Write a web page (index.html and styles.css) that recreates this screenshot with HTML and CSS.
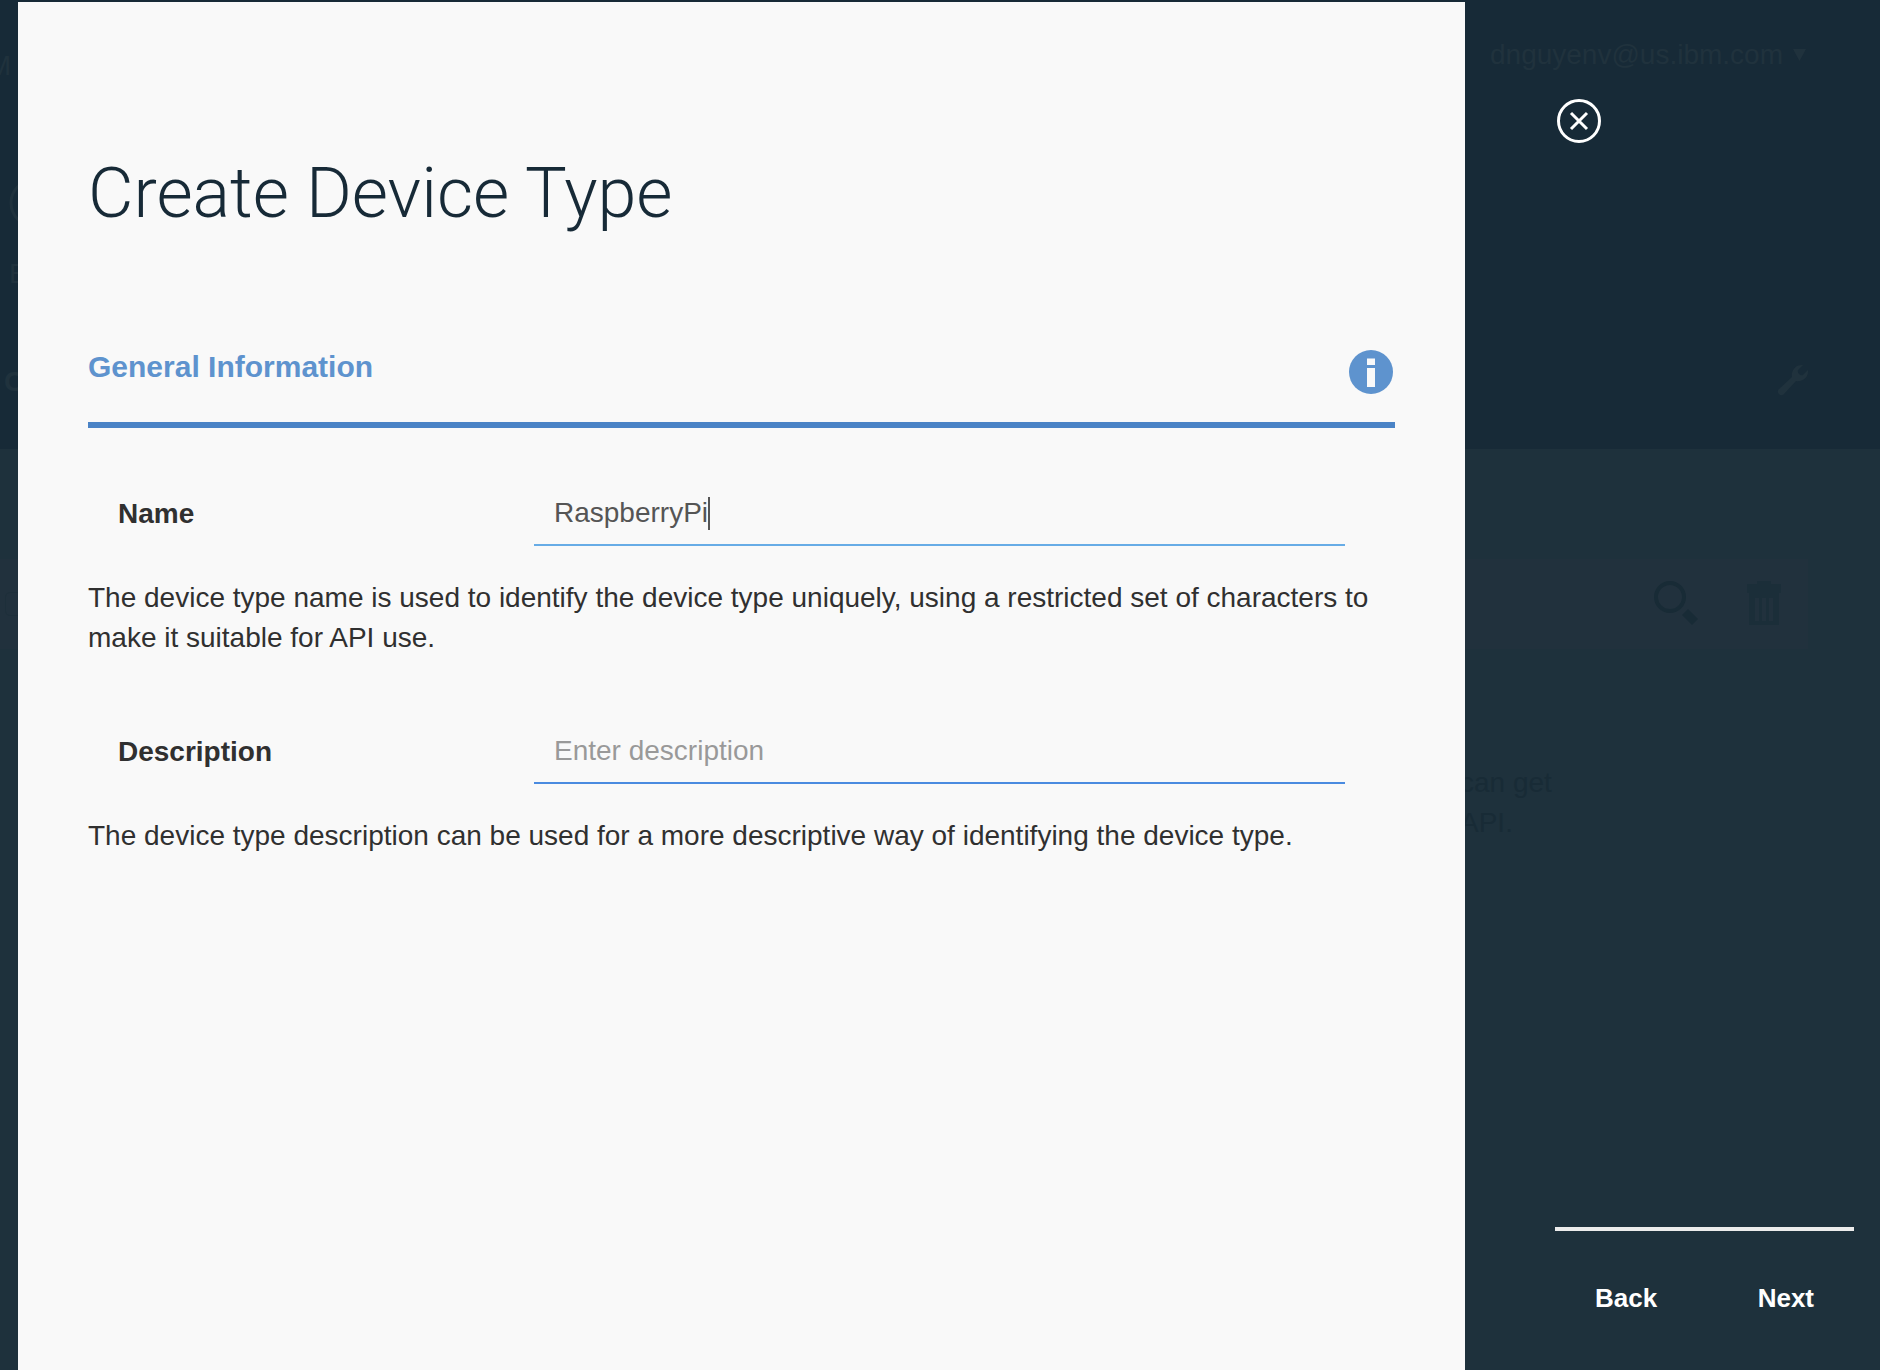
FILE: index.html
```html
<!DOCTYPE html>
<html lang="en">
<head>
<meta charset="utf-8">
<title>Create Device Type</title>
<link rel="stylesheet" href="styles.css">
</head>
<body>
<div class="app">
  <header class="app-header">
    <div class="topbar">
      <span class="brand">M</span>
      <a class="account" href="#">dnguyenv@us.ibm.com <svg width="13" height="12" viewBox="0 0 13 12" aria-hidden="true"><path d="M0 0h13L6.500 12z"/></svg></a>
    </div>
    <div class="org">
      <svg width="50" height="50" viewBox="0 0 50 50" aria-hidden="true"><circle cx="25" cy="25" r="23" fill="none" stroke-width="3"/></svg>
      <span>B</span>
    </div>
    <div class="tabs">
      <span class="tab">C</span>
      <svg class="wrench" width="32" height="32" viewBox="0 0 32 32" aria-hidden="true"><path d="M26 1A10 10 0 0 0 15 13L1.500 25.500a3.600 3.600 0 0 0 5 5L19 17A10 10 0 0 0 31 6L26 11a4 4 0 0 1-5-5z"/></svg>
    </div>
  </header>
  <main class="app-main">
    <div class="toolbar">
      <span class="chip"></span>
      <svg class="search" width="46" height="46" viewBox="0 0 46 46" aria-hidden="true"><circle cx="17" cy="16" r="14" fill="none" stroke-width="4"/><path d="M35 28l10 10-6 6-10-10z"/></svg>
      <svg class="trash" width="34" height="46" viewBox="0 0 34 46" aria-hidden="true"><path fill-rule="evenodd" d="M10 0h14v3h10v9h-2v32H2V12H0V3h10zM8 17v23h4V17zm7 0v23h4V17zm7 0v23h4V17z"/></svg>
    </div>
    <p class="hint">can get<br>API.</p>
  </main>
</div>

<form class="overlay" role="dialog" aria-labelledby="title">
  <section class="panel">
    <h1 class="title" id="title">Create Device Type</h1>
    <div class="section-head">
      <h2 class="section-title">General Information</h2>
      <button class="icon-button" type="button" aria-label="Information">
        <svg width="44" height="44" viewBox="0 0 44 44" aria-hidden="true"><circle cx="22" cy="22" r="22" fill="#5e93ce"/><path fill="#f9f9f9" d="M18 8.500h8V15h-8zM18 18h8v19h-8z"/></svg>
      </button>
    </div>
    <div class="field">
      <label class="label" for="name">Name</label>
      <div class="control control-active">
        <input class="input input-fit" id="name" type="text" value="RaspberryPi"><span class="caret"></span>
      </div>
    </div>
    <p class="help">The device type name is used to identify the device type uniquely, using a restricted set of characters to make it suitable for API use.</p>
    <div class="field">
      <label class="label" for="description">Description</label>
      <div class="control">
        <input class="input" id="description" type="text" placeholder="Enter description">
      </div>
    </div>
    <p class="help">The device type description can be used for a more descriptive way of identifying the device type.</p>
  </section>
  <aside class="side">
    <button class="icon-button" type="button" aria-label="Close">
      <svg width="44" height="44" viewBox="0 0 44 44" fill="none" stroke="#fff" stroke-width="3" aria-hidden="true"><circle cx="22" cy="22" r="20.500"/><path d="M14 14l16 16M30 14L14 30"/></svg>
    </button>
    <div class="actions">
      <button class="action" type="button">Back</button>
      <button class="action" type="submit">Next</button>
    </div>
  </aside>
</form>
</body>
</html>
```
FILE: styles.css
```css
* {
  box-sizing: border-box;
}

body {
  margin: 0;
  overflow: hidden;
  background: #1e313c;
  color: #303030;
  font: 28px/40px "Liberation Sans", Arial, sans-serif;
}

h1, h2, p {
  margin: 0;
}

button, input {
  padding: 0;
  border: 0;
  background: none;
  color: inherit;
  font: inherit;
  outline: 0;
}

svg {
  display: block;
}

/* Dimmed application behind the dialog */
.app {
  min-height: 100vh;
}

.app-header {
  height: 449px;
  padding-top: 31px;
  background: #172a37;
  color: #20323d;
  fill: currentColor;
  stroke: none;
}

.topbar, .tabs {
  display: flex;
  align-items: flex-start;
  justify-content: space-between;
}

.topbar {
  padding-right: 74px;
}

.brand {
  width: 11px;
  padding-top: 15px;
  display: flex;
  justify-content: flex-end;
}

.account {
  display: flex;
  align-items: center;
  gap: 10px;
  padding-top: 4px;
  color: inherit;
  text-decoration: none;
}

.org {
  padding: 92px 0 0 9px;
}

.org svg {
  stroke: currentColor;
}

.org span {
  display: block;
  margin-top: 26px;
}

.tabs {
  padding: 68px 71px 0 4px;
  font-weight: 700;
}

.wrench {
  margin-top: 2px;
}

.app-main {
  padding-top: 110px;
  color: #182b36;
  fill: currentColor;
}

.toolbar {
  display: flex;
  align-items: center;
  height: 90px;
  margin-right: 72px;
  padding: 0 27px 0 5px;
  background: #21313d;
}

.chip {
  width: 24px;
  height: 24px;
  border: 1px solid #1d2f3a;
  border-radius: 5px;
}

.search {
  margin-left: auto;
  stroke: none;
}

.search circle {
  stroke: currentColor;
}

.trash {
  margin-left: 48px;
  color: #1b2e39;
}

.hint {
  width: 420px;
  margin: 114px 0 0 auto;
}

/* Dialog */
.overlay {
  position: absolute;
  inset: 2px 0 0 18px;
  display: flex;
}

.panel {
  flex: 1;
  padding: 147px 70px 0;
  background: #f9f9f9;
}

.title {
  color: #172a37;
  font: 300 70px/88px Roboto, "Liberation Sans", sans-serif;
}

.section-head {
  display: flex;
  justify-content: space-between;
  margin-top: 113px;
  padding-bottom: 28px;
  border-bottom: 6px solid #4a83c6;
}

.section-title {
  color: #5e93ce;
  font-size: 30px;
  line-height: 34px;
}

.icon-button {
  align-self: flex-start;
  width: 44px;
  height: 44px;
}

.section-head .icon-button {
  margin: 0 2px;
}

.field {
  display: flex;
  align-items: center;
  padding: 4px 50px 0 30px;
}

.section-head + .field {
  margin-top: 50px;
}

.help + .field {
  margin-top: 58px;
}

.label {
  flex: 0 0 416px;
  font-weight: 700;
}

.control {
  flex: 1;
  display: flex;
  align-items: center;
  height: 64px;
  padding: 0 20px;
  border-bottom: 2px solid #4a8be0;
}

.control-active {
  border-color: #67ace6;
}

.input {
  width: 100%;
  height: 40px;
  color: #555;
}

.input-fit {
  width: auto;
  field-sizing: content;
}

.input::placeholder {
  color: #999;
}

.caret {
  width: 2px;
  height: 33px;
  background: #555;
}

.help {
  margin-top: 32px;
}

.side {
  flex: 0 0 415px;
  display: flex;
  flex-direction: column;
  justify-content: space-between;
  padding: 97px 26px 50px 90px;
}

.side .icon-button {
  margin-left: 2px;
}

.actions {
  display: flex;
  justify-content: space-between;
  padding: 45px 40px 0;
  border-top: 4px solid #ececec;
}

.action {
  color: #fff;
  font-size: 26px;
  font-weight: 700;
  line-height: 44px;
}
```
